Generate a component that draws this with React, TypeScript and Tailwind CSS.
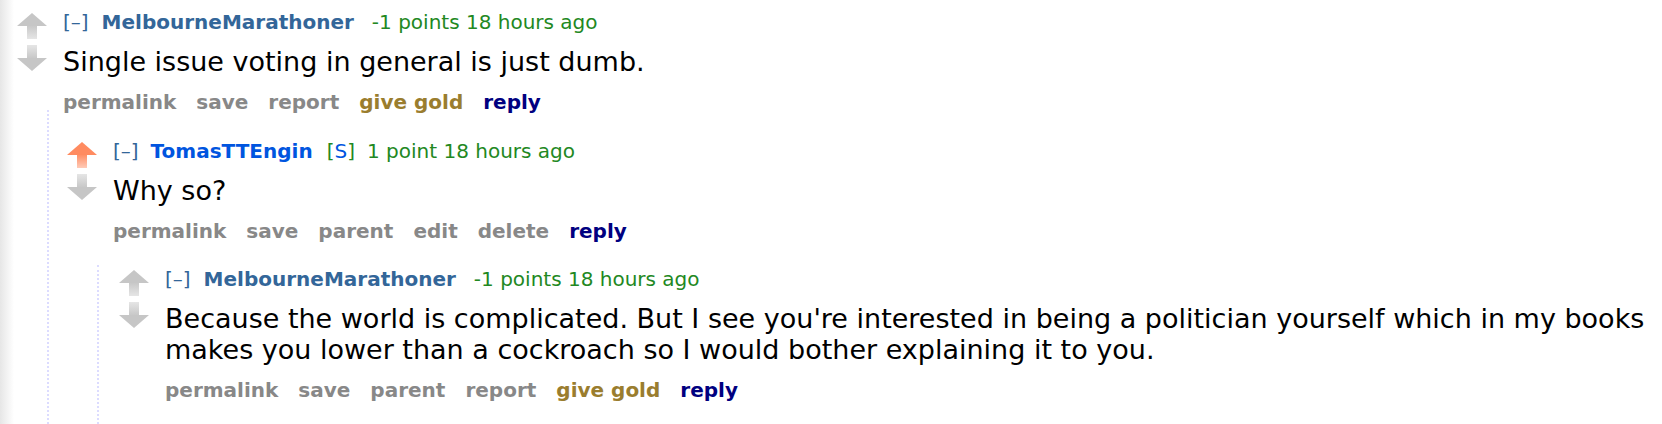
import React from "react";

type Action = { label: string; kind?: "gold" | "reply" };

type CommentData = {
  author: string;
  submitter?: boolean;
  score: string;
  time: string;
  upvoted?: boolean;
  body: string;
  actions: Action[];
  child?: CommentData;
};

const thread: CommentData = {
  author: "MelbourneMarathoner",
  score: "-1 points",
  time: "18 hours ago",
  body: "Single issue voting in general is just dumb.",
  actions: [
    { label: "permalink" },
    { label: "save" },
    { label: "report" },
    { label: "give gold", kind: "gold" },
    { label: "reply", kind: "reply" },
  ],
  child: {
    author: "TomasTTEngin",
    submitter: true,
    upvoted: true,
    score: "1 point",
    time: "18 hours ago",
    body: "Why so?",
    actions: [
      { label: "permalink" },
      { label: "save" },
      { label: "parent" },
      { label: "edit" },
      { label: "delete" },
      { label: "reply", kind: "reply" },
    ],
    child: {
      author: "MelbourneMarathoner",
      score: "-1 points",
      time: "18 hours ago",
      body:
        "Because the world is complicated. But I see you're interested in being a politician yourself which in my books makes you lower than a cockroach so I would bother explaining it to you.",
      actions: [
        { label: "permalink" },
        { label: "save" },
        { label: "parent" },
        { label: "report" },
        { label: "give gold", kind: "gold" },
        { label: "reply", kind: "reply" },
      ],
    },
  },
};

// reddit style vote arrows, stem fades out away from the head
function Arrow({ dir, color, id }: { dir: "up" | "down"; color: string; id: string }) {
  if (dir === "up") {
    return (
      <svg width="30" height="26" viewBox="0 0 30 26">
        <defs>
          <linearGradient id={id} x1="0" y1="0" x2="0" y2="1">
            <stop offset="0" stopColor={color} />
            <stop offset="1" stopColor={color} stopOpacity="0.45" />
          </linearGradient>
        </defs>
        <polygon points="15,0 30,13 0,13" fill={color} />
        <rect x="10" y="12" width="10" height="14" fill={`url(#${id})`} />
      </svg>
    );
  }
  return (
    <svg width="30" height="26" viewBox="0 0 30 26">
      <defs>
        <linearGradient id={id} x1="0" y1="0" x2="0" y2="1">
          <stop offset="0" stopColor={color} stopOpacity="0.45" />
          <stop offset="1" stopColor={color} />
        </linearGradient>
      </defs>
      <rect x="10" y="0" width="10" height="14" fill={`url(#${id})`} />
      <polygon points="0,13 30,13 15,26" fill={color} />
    </svg>
  );
}

function Comment({ c, depth }: { c: CommentData; depth: number }) {
  return (
    <div>
      <div className="flex">
        <div className="flex flex-col gap-[6px] mt-[4px] w-[30px] mr-[16px] shrink-0">
          <Arrow dir="up" color={c.upvoted ? "#ff8b60" : "#c6c6c6"} id={`up${depth}`} />
          <Arrow dir="down" color="#c6c6c6" id={`down${depth}`} />
        </div>
        <div className="min-w-0">
          <div className="text-[20px] leading-[26px] whitespace-nowrap">
            <span className="text-[#336699]">[–]</span>
            <span
              className={
                c.submitter
                  ? "ml-[12px] font-bold text-[#0055df]"
                  : "ml-[13px] font-bold text-[#336699]"
              }
            >
              {c.author}
            </span>
            {c.submitter && (
              <span className="ml-[14px] text-[#228822]">
                [<span className="text-[#0055df]">S</span>]
              </span>
            )}
            <span className={c.submitter ? "ml-[12px] text-[#228822]" : "ml-[18px] text-[#228822]"}>
              {c.score} {c.time}
            </span>
          </div>
          <div className="mt-[11px] text-[27px] leading-[31px] text-black">{c.body}</div>
          <div className="mt-[15px] flex gap-[20px] text-[20px] leading-[20px] font-bold">
            {c.actions.map((a) => (
              <span
                key={a.label}
                className={
                  a.kind === "gold"
                    ? "text-[#9a7d2e]"
                    : a.kind === "reply"
                    ? "text-[#000080]"
                    : "text-[#888888]"
                }
              >
                {a.label}
              </span>
            ))}
          </div>
        </div>
      </div>
      {c.child && (
        <div
          className={
            depth === 0
              ? "ml-[30px] mt-[-2px] pt-[28px] pl-[18px] pb-[80px] border-l-2 border-dotted border-[#dcdcff]"
              : "ml-[30px] mt-[24px] pt-[1px] pl-[20px] pb-[80px] border-l-2 border-dotted border-[#dcdcff]"
          }
        >
          <Comment c={c.child} depth={depth + 1} />
        </div>
      )}
    </div>
  );
}

export default function App() {
  return (
    <div
      className="w-[1662px] h-[424px] overflow-hidden pl-[17px] pt-[9px] bg-[linear-gradient(to_right,#e6e6e6,#ffffff_14px)]"
      style={{ fontFamily: '"DejaVu Sans", Verdana, sans-serif' }}
    >
      <Comment c={thread} depth={0} />
    </div>
  );
}
